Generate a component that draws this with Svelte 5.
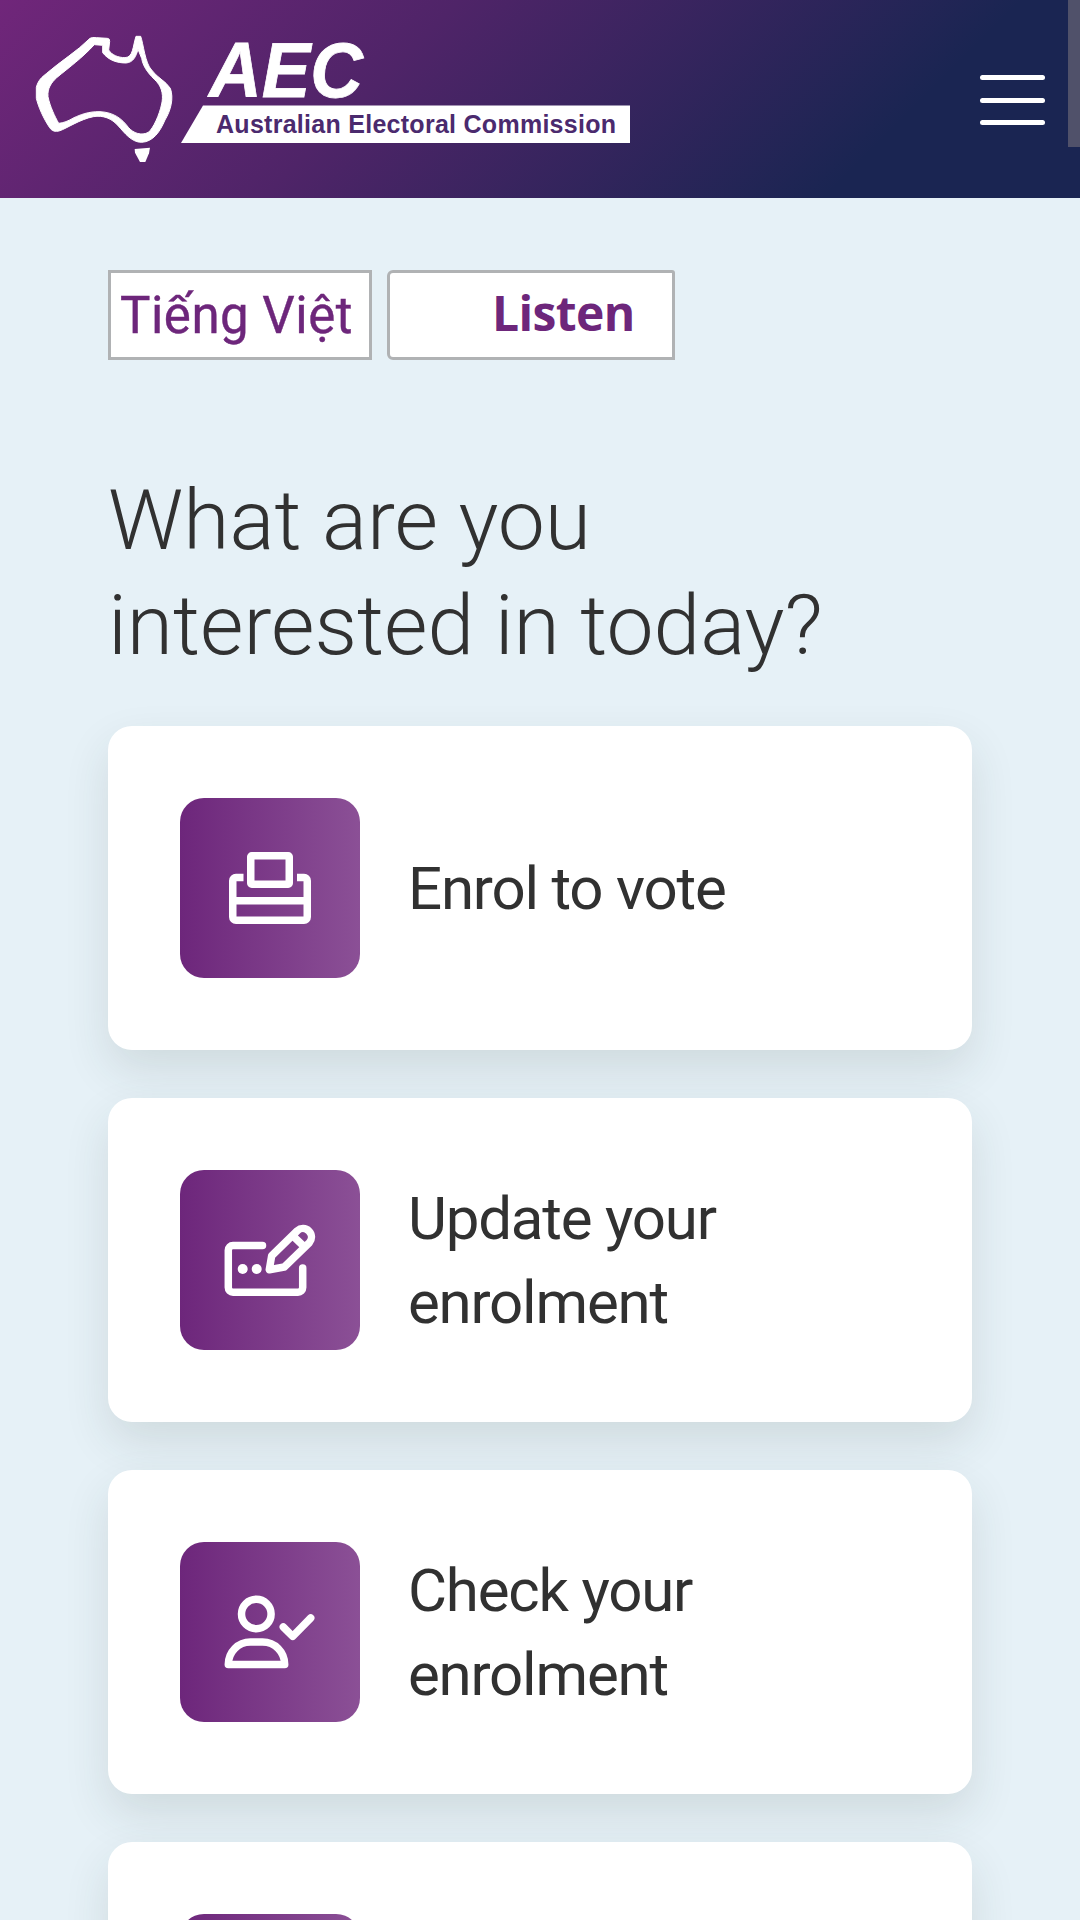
<script lang="ts">
	const tasks = [
		{ icon: 'ballot', label: 'Enrol to vote' },
		{ icon: 'edit', label: 'Update your enrolment' },
		{ icon: 'person', label: 'Check your enrolment' },
		{ icon: '', label: '' }
	];
</script>

<div class="page">
	<header>
		<svg class="logo" viewBox="36 36 594 126" role="img" aria-label="Australian Electoral Commission">
			<g transform="scale(0.33333)" fill="#fff">
				<path
					stroke="#fff"
					stroke-width="3"
					stroke-linejoin="round"
					fill-rule="evenodd"
					d="M270 115Q276 111 290 113L322 115Q330 116 329 124L326 150C335 165 355 173 375 173C400 172 398 140 408 109L422 109C430 130 435 190 455 210C470 232 496 242 511 265C522 295 512 332 495 360C480 395 460 425 425 427C395 427 375 400 355 378C335 355 310 345 280 350C240 358 200 385 180 392C165 397 155 392 149 383C130 355 115 320 109 295L109 262C115 240 125 232 140 220C180 185 230 155 270 115Z
					M283 134L308 136L308 158C325 180 350 189 378 189C400 187 408 170 414 148L425 175C430 205 450 225 470 245C488 265 490 290 485 312C478 345 460 385 445 397C425 408 400 400 385 382C365 355 340 337 300 335C265 334 240 345 222 353C205 363 190 369 176 370C165 350 150 320 144 290C142 265 153 249 170 233C210 200 245 175 283 134Z"
				/>
				<path d="M404 447L450 443L447 460L436 486L420 486L405 458Z" />
			</g>
			<path d="M203 105.500H630V143H181Z" fill="#fff" />
			<text class="aec" x="209" y="97" textLength="154" lengthAdjust="spacingAndGlyphs">AEC</text>
			<text class="name" x="216" y="132.500" textLength="400">Australian Electoral Commission</text>
		</svg>
		<button class="menu" aria-label="Menu">
			<span></span>
			<span></span>
			<span></span>
		</button>
	</header>
	<div class="scrollbar"></div>

	<main>
		<div class="tools">
			<a class="language" href="#vi">Tiếng Việt</a>
			<a class="listen" href="#listen">Listen</a>
		</div>

		<h1>What are you interested in today?</h1>

		<div class="cards">
			{#each tasks as task}
				<a class="card" href="#task">
					<span class="tile">
						<svg viewBox="0 0 180 180">
							{#if task.icon === 'ballot'}
								<rect x="70.750" y="57.750" width="38.500" height="28.500" rx="1" />
								<path d="M63.500 79.500H56a3.250 3.250 0 0 0-3.250 3.250V119a3.250 3.250 0 0 0 3.250 3.250H124a3.250 3.250 0 0 0 3.250-3.250V82.750A3.250 3.250 0 0 0 124 79.500H117M53 102.750H127" />
							{:else if task.icon === 'edit'}
								<g stroke-linecap="round" stroke-linejoin="round">
									<path d="M82.500 75.500H53a4.700 4.700 0 0 0-4.700 4.700V117.500a4.700 4.700 0 0 0 4.700 4.700H118a4.700 4.700 0 0 0 4.700-4.700V98" />
									<path d="M89.300 99.700L91.700 85.700L117.300 60.700A8.500 8.500 0 0 1 129.300 72.700L104.300 97ZM113 66L124 76.500" />
								</g>
								<circle class="dot" cx="62.700" cy="99" r="5" />
								<circle class="dot" cx="76.700" cy="99" r="5" />
							{:else if task.icon === 'person'}
								<g stroke-linecap="round" stroke-linejoin="round">
									<circle cx="76.300" cy="72" r="14.800" />
									<path d="M48.300 122.500C48.300 110 58 100 70.500 100H82.500C95 100 104.700 110 104.700 122.500Z" />
									<path d="M103.300 85L112.700 94.300L130.700 76" />
								</g>
							{/if}
						</svg>
					</span>
					<span class="label">{task.label}</span>
				</a>
			{/each}
		</div>
	</main>
</div>

<style>
	:global(body) {
		margin: 0;
		background: #e6f1f7;
	}

	.page {
		position: relative;
		height: 1920px;
		overflow: hidden;
		background: #e6f1f7;
		color: #313131;
		font-family: Roboto, sans-serif;
	}

	a {
		color: inherit;
		text-decoration: none;
	}

	header {
		box-sizing: border-box;
		height: 198px;
		padding: 36px 35px 36px 36px;
		display: flex;
		justify-content: space-between;
		align-items: flex-start;
		background: linear-gradient(135deg, #70267a, #4f2468 36%, #1a2552 80%);
	}

	.logo {
		width: 594px;
		height: 126px;
		overflow: visible;
	}

	.aec {
		fill: #fff;
		stroke: #fff;
		stroke-width: 0.800;
		font: italic bold 78px "Liberation Sans", sans-serif;
	}

	.name {
		fill: #4b2a6e;
		font: bold 25px "Liberation Sans", sans-serif;
	}

	.menu {
		width: 65px;
		margin-top: 39px;
		padding: 0;
		display: flex;
		flex-direction: column;
		gap: 17.500px;
		border: 0;
		background: none;
	}
	.menu span {
		height: 5px;
		border-radius: 3px;
		background: #fff;
	}

	/* lies over the page edge */
	.scrollbar {
		position: absolute;
		top: 0;
		right: 0;
		width: 12px;
		height: 147px;
		background: #50516a;
	}

	main {
		padding: 72px 108px 0;
	}

	.tools {
		display: flex;
		gap: 15px;
	}
	.tools a {
		box-sizing: border-box;
		height: 90px;
		border: 3px solid #b0b2b4;
		background: #fff;
		color: #6d267b;
		white-space: nowrap;
	}

	.language {
		width: 264px;
		padding-left: 9px;
		font-size: 51px;
		line-height: 86px;
		letter-spacing: 0.500px;
		-webkit-text-stroke: 0.400px #6d267b;
	}

	.listen {
		width: 288px;
		padding-left: 102px;
		border-radius: 6px 3px 0 6px;
		font: bold 48px/79px "Open Sans", sans-serif;
		letter-spacing: -0.600px;
	}

	h1 {
		margin: 108px 0 48px;
		font-size: 84px;
		font-weight: 300;
		line-height: 105px;
	}

	.cards {
		display: flex;
		flex-direction: column;
		gap: 48px;
	}

	.card {
		box-sizing: border-box;
		height: 324px;
		padding: 72px;
		display: flex;
		align-items: center;
		gap: 48px;
		border-radius: 24px;
		background: #fff;
		box-shadow: 0 20px 46px rgba(40, 60, 50, 0.12);
	}

	.tile {
		flex: none;
		width: 180px;
		height: 180px;
		border-radius: 24px;
		background: linear-gradient(90deg, #6d267b, #8b5096);
	}
	.tile svg {
		display: block;
		fill: none;
		stroke: #fff;
		stroke-width: 7.500;
	}
	.tile .dot {
		fill: #fff;
		stroke: none;
	}

	.label {
		padding-top: 1px;
		font-size: 60px;
		line-height: 84px;
		letter-spacing: -1.200px;
	}
</style>
